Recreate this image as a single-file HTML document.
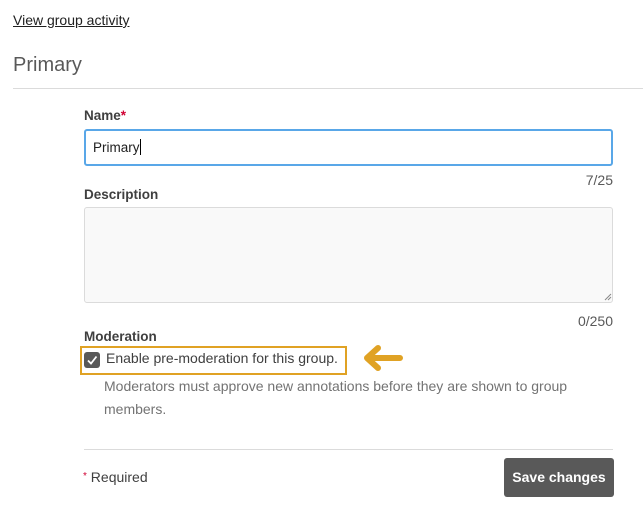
<!DOCTYPE html>
<html><head><meta charset="utf-8"><style>
*{box-sizing:border-box;margin:0;padding:0}
body{width:643px;height:519px;background:#fff;font-family:"Liberation Sans",Arial,sans-serif;color:#202020;position:relative;overflow:hidden}
.a{position:absolute;white-space:nowrap}
</style></head><body>
<div class="a" style="left:13px;top:12px;font-size:14px;text-decoration:underline;color:#202020">View group activity</div>
<div class="a" style="left:13px;top:54px;font-size:20px;color:#595959">Primary</div>
<div class="a" style="left:13px;top:88px;width:630px;height:1px;background:#dbdbdb"></div>
<div class="a" style="left:84px;top:108px;font-size:13.5px;font-weight:bold;color:#3f3f3f">Name<span style="color:#d00032">*</span></div>
<div class="a" style="left:84px;top:129px;width:529px;height:37px;border:2px solid #59a7e8;border-radius:3px;background:#fff"></div>
<div class="a" style="left:93px;top:139px;font-size:13.5px;color:#202020">Primary<span style="display:inline-block;width:1px;height:16px;background:#000;vertical-align:-3px"></span></div>
<div class="a" style="left:540px;top:172px;width:73px;text-align:right;font-size:14px;color:#595959">7/25</div>
<div class="a" style="left:84px;top:187px;font-size:13.5px;font-weight:bold;color:#3f3f3f">Description</div>
<div class="a" style="left:84px;top:207px;width:529px;height:96px;border:1px solid #dbdbdb;border-radius:3px;background:#f9f9f9"></div>
<svg class="a" style="left:604px;top:293px" width="8" height="8"><path d="M1 7L7 1M4 7L7 4" stroke="#888" stroke-width="1"/></svg>
<div class="a" style="left:540px;top:313px;width:73px;text-align:right;font-size:14px;color:#595959">0/250</div>
<div class="a" style="left:84px;top:329px;font-size:13.5px;font-weight:bold;color:#3f3f3f">Moderation</div>
<div class="a" style="left:80px;top:346px;width:267px;height:29px;border:2px solid #e0a224"></div>
<div class="a" style="left:84px;top:352px;width:16px;height:16px;background:#595959;border-radius:3px"></div>
<svg class="a" style="left:84px;top:352px" width="16" height="16"><path d="M4 8.5L7 11.5L12.5 4.5" fill="none" stroke="#fff" stroke-width="1.8"/></svg>
<div class="a" style="left:106px;top:350px;font-size:14px;color:#3f3f3f">Enable pre-moderation for this group.</div>
<svg class="a" style="left:360px;top:344px" width="45" height="28"><path d="M40 14H8M18 4L7 14L18 24" fill="none" stroke="#e0a224" stroke-width="6" stroke-linecap="round" stroke-linejoin="round"/></svg>
<div class="a" style="left:104px;top:375px;font-size:14px;color:#737373;line-height:23px;white-space:normal;width:480px">Moderators must approve new annotations before they are shown to group members.</div>
<div class="a" style="left:84px;top:449px;width:529px;height:1px;background:#dbdbdb"></div>
<div class="a" style="left:83px;top:469px;font-size:14px;color:#3f3f3f"><span style="color:#d00032;font-size:10px;vertical-align:3px">*</span> Required</div>
<div class="a" style="left:504px;top:458px;width:110px;height:39px;background:#595959;border-radius:3px;color:#fff;font-size:14px;font-weight:bold;text-align:center;line-height:39px">Save changes</div>
</body></html>
